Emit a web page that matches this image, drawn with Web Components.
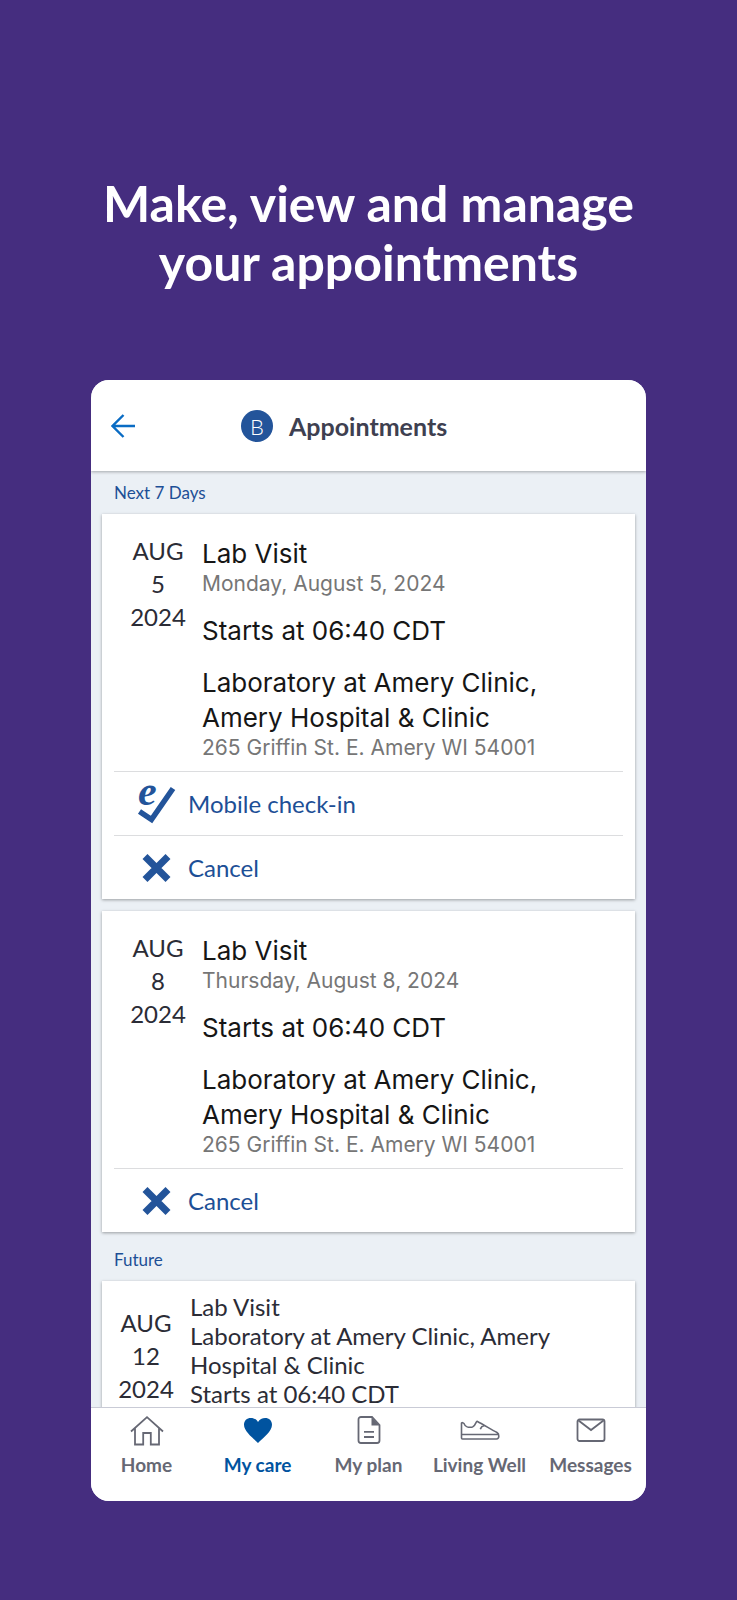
<!DOCTYPE html>
<html lang="en">
<head>
<meta charset="utf-8">
<meta name="viewport" content="width=device-width, initial-scale=1">
<title>Appointments</title>
<style>
    body {
        margin: 0;
        background: #452d7f;
        font-family: Lato, "Noto Sans", sans-serif;
        color: #2b2c36;
    }
</style>
</head>
<body>

<promo-stage>
    <span slot="headline">Make, view and manage<br>your appointments</span>
    <app-window>
        <app-header slot="header" initial="B">Appointments</app-header>

        <appointment-section label="Next 7 Days">
            <appointment-card month="AUG" day="5" year="2024" type="Lab Visit" date="Monday, August 5, 2024"
                time="Starts at 06:40 CDT" place="Laboratory at Amery Clinic, Amery Hospital &amp; Clinic"
                address="265 Griffin St. E. Amery WI 54001">
                <card-action icon="checkin">Mobile check-in</card-action>
                <card-action icon="cancel">Cancel</card-action>
            </appointment-card>
            <appointment-card month="AUG" day="8" year="2024" type="Lab Visit" date="Thursday, August 8, 2024"
                time="Starts at 06:40 CDT" place="Laboratory at Amery Clinic, Amery Hospital &amp; Clinic"
                address="265 Griffin St. E. Amery WI 54001">
                <card-action icon="cancel">Cancel</card-action>
            </appointment-card>
        </appointment-section>

        <appointment-section label="Future">
            <appointment-summary month="AUG" day="12" year="2024">
                <div>Lab Visit</div>
                <div>Laboratory at Amery Clinic, Amery Hospital &amp; Clinic</div>
                <div>Starts at 06:40 CDT</div>
            </appointment-summary>
        </appointment-section>

        <tab-bar slot="tabs">
            <tab-item icon="home">Home</tab-item>
            <tab-item icon="heart" active>My care</tab-item>
            <tab-item icon="plan">My plan</tab-item>
            <tab-item icon="shoe">Living Well</tab-item>
            <tab-item icon="mail">Messages</tab-item>
        </tab-bar>
    </app-window>
</promo-stage>

<script>
const icons = {
    back: `<svg width="24" height="24" viewBox="0 0 24 24" fill="none" stroke="#0a6cc4" stroke-width="2.4" aria-hidden="true">
        <path d="M24 12H1.5M12.5 1L1.5 12l11 11"/></svg>`,
    checkin: `<svg width="38" height="38" viewBox="0 0 38 38" overflow="visible" aria-hidden="true">
        <text x="0" y="20" font-family="Liberation Serif, serif" font-style="italic" font-weight="bold" font-size="42" fill="#23549a">e</text>
        <path d="M1.5 26.5L13.5 34.5 35 3.5" fill="none" stroke="#23549a" stroke-width="5.5"/></svg>`,
    cancel: `<svg width="38" height="38" viewBox="0 0 38 38" aria-hidden="true">
        <path d="M7 7.5l23 23M30 7.5l-23 23" fill="none" stroke="#23549a" stroke-width="7"/></svg>`,
    home: `<svg width="40" height="32" viewBox="0 0 40 32" fill="none" stroke="#666874" stroke-width="1.8" aria-hidden="true">
        <path d="M4 17.5L20 3.2l16 14.3M8 14v16.5h8.2V19h7.6v11.5H32V14"/></svg>`,
    heart: `<svg width="40" height="32" viewBox="0 0 40 32" fill="#00539f" aria-hidden="true">
        <path d="M20 29C15 24 6 17.5 6 10.8 6 6.5 9 4 12.8 4c3 0 5.700 1.300 7.200 4 1.500-2.700 4.200-4 7.200-4C31 4 34 6.500 34 10.800 34 17.500 25 24 20 29z"/></svg>`,
    plan: `<svg width="40" height="32" viewBox="0 0 40 32" fill="none" stroke="#666874" stroke-width="1.8" aria-hidden="true">
        <path d="M23 3H12a2.500 2.500 0 0 0-2.500 2.500v21A2.500 2.500 0 0 0 12 29h16a2.500 2.500 0 0 0 2.500-2.500V11z"/>
        <path d="M22.500 3v8.500h8z" fill="#666874" stroke="none"/>
        <path d="M15 17.800h10M15 23h10"/></svg>`,
    shoe: `<svg width="40" height="32" viewBox="0 0 40 32" fill="none" stroke="#666874" stroke-width="1.6" stroke-linejoin="round" aria-hidden="true">
        <path d="M1.500 9v15c0 .7.300 1 1 1h34c3 0 3-5 .5-6.500C32 16 25 11.500 17 7.200c-1 0-1.500 4.800-4.500 5.800-4 1-7.500-.5-8.500-3.500-.5-1-2.500-1-2.500-.5zM1.500 20.500h36.500M24.500 11.500c-2 .3-3.500 1.700-4.200 3.800"/></svg>`,
    mail: `<svg width="40" height="32" viewBox="0 0 40 32" fill="none" stroke="#666874" stroke-width="1.8" aria-hidden="true">
        <rect x="6.500" y="5.500" width="27" height="21.500" rx="2"/><path d="M7.500 6.500L20 16 32.500 6.500"/></svg>`
};

// month / day / year stack shared by both kinds of card
const dateStyle = `
    .date {
        text-align: center;
        font-size: 24px;
        line-height: 33px;
    }`;

function dateMarkup(el) {
    return `<div class="date">
        <div>${el.getAttribute('month')}</div>
        <div>${el.getAttribute('day')}</div>
        <div>${el.getAttribute('year')}</div>
    </div>`;
}

class PromoStage extends HTMLElement {
    connectedCallback() {
        this.attachShadow({mode: 'open'});
        this.shadowRoot.innerHTML =
            `<style>
                :host {
                    display: flex;
                    flex-direction: column;
                    box-sizing: border-box;
                    height: 100vh;
                    min-height: 900px;
                    padding: 174px 91px 99px;
                }
                h1 {
                    margin: 0 0 88px;
                    text-align: center;
                    font-size: 50px;
                    line-height: 59px;
                    font-weight: 700;
                    color: #fff;
                    white-space: nowrap;
                }
            </style>
            <h1><slot name="headline"></slot></h1>
            <slot></slot>`;
    }
}

class AppWindow extends HTMLElement {
    connectedCallback() {
        this.attachShadow({mode: 'open'});
        this.shadowRoot.innerHTML =
            `<style>
                :host {
                    display: flex;
                    flex-direction: column;
                    flex: 1;
                    min-height: 0;
                    border-radius: 18px;
                    overflow: hidden;
                    background: #ebf0f5;
                }
                main {
                    flex: 1;
                    min-height: 0;
                    overflow: hidden;
                    padding: 0 11px;
                }
            </style>
            <slot name="header"></slot>
            <main><slot></slot></main>
            <slot name="tabs"></slot>`;
    }
}

class AppHeader extends HTMLElement {
    connectedCallback() {
        this.attachShadow({mode: 'open'});
        this.shadowRoot.innerHTML =
            `<style>
                :host {
                    display: flex;
                    align-items: center;
                    gap: 106px;
                    height: 91px;
                    padding-left: 20px;
                    background: #fff;
                    box-shadow: 0 1px 3px rgba(0,0,0,0.3);
                    z-index: 1;
                }
                button {
                    display: flex;
                    padding: 0;
                    border: 0;
                    background: none;
                }
                .title {
                    display: flex;
                    align-items: center;
                    gap: 16px;
                }
                .avatar {
                    width: 32px;
                    height: 32px;
                    border-radius: 50%;
                    background: #23549a;
                    color: #fff;
                    font-size: 22px;
                    font-weight: 300;
                    line-height: 34px;
                    text-align: center;
                }
                h2 {
                    margin: 0;
                    font-size: 25px;
                    line-height: 32px;
                    font-weight: 700;
                    color: #3e4050;
                }
            </style>
            <button type="button" aria-label="Back">${icons.back}</button>
            <div class="title">
                <span class="avatar">${this.getAttribute('initial')}</span>
                <h2><slot></slot></h2>
            </div>`;
    }
}

class AppointmentSection extends HTMLElement {
    connectedCallback() {
        this.attachShadow({mode: 'open'});
        this.shadowRoot.innerHTML =
            `<style>
                :host {
                    display: flex;
                    flex-direction: column;
                    gap: 12px;
                    padding-top: 12px;
                }
                :host(:not(:first-of-type)) {
                    padding-top: 18px;
                }
                h3 {
                    margin: 0;
                    padding-left: 12px;
                    font-size: 17px;
                    line-height: 19px;
                    font-weight: 400;
                    color: #1d4f96;
                }
            </style>
            <h3>${this.getAttribute('label')}</h3>
            <slot></slot>`;
    }
}

class AppointmentCard extends HTMLElement {
    connectedCallback() {
        this.attachShadow({mode: 'open'});
        this.shadowRoot.innerHTML =
            `<style>
                :host {
                    display: block;
                    padding: 20px 12px 0;
                    background: #fff;
                    box-shadow: 0 1px 3px rgba(0,0,0,0.35);
                }
                ${dateStyle}
                .body {
                    display: grid;
                    grid-template-columns: 88px 1fr;
                    padding-bottom: 11px;
                }
                .details {
                    padding: 2px 24px 0 0;
                    font-family: Inter, "Liberation Sans", sans-serif;
                    font-size: 26px;
                    line-height: 35px;
                    color: #161616;
                }
                .small {
                    font-size: 21px;
                    line-height: 25px;
                    color: #767676;
                }
                .time {
                    margin: 17px 0;
                }
            </style>
            <div class="body">
                ${dateMarkup(this)}
                <div class="details">
                    <div>${this.getAttribute('type')}</div>
                    <div class="small">${this.getAttribute('date')}</div>
                    <div class="time">${this.getAttribute('time')}</div>
                    <div>${this.getAttribute('place')}</div>
                    <div class="small">${this.getAttribute('address')}</div>
                </div>
            </div>
            <slot></slot>`;
    }
}

class CardAction extends HTMLElement {
    connectedCallback() {
        this.attachShadow({mode: 'open'});
        this.shadowRoot.innerHTML =
            `<style>
                :host {
                    display: block;
                    border-top: 1px solid #dcdddf;
                }
                button {
                    display: flex;
                    align-items: center;
                    gap: 12px;
                    width: 100%;
                    height: 63px;
                    padding: 0 24px;
                    border: 0;
                    background: none;
                    font: inherit;
                    font-size: 24px;
                    color: #1d4f96;
                }
            </style>
            <button type="button">${icons[this.getAttribute('icon')]}<slot></slot></button>`;
    }
}

class AppointmentSummary extends HTMLElement {
    connectedCallback() {
        this.attachShadow({mode: 'open'});
        this.shadowRoot.innerHTML =
            `<style>
                :host {
                    display: grid;
                    grid-template-columns: 64px 1fr;
                    gap: 12px;
                    padding: 11px 12px;
                    background: #fff;
                    box-shadow: 0 1px 3px rgba(0,0,0,0.35);
                }
                ${dateStyle}
                .date {
                    padding-top: 14px;
                }
                .lines {
                    font-size: 24px;
                    line-height: 29px;
                }
            </style>
            ${dateMarkup(this)}
            <div class="lines"><slot></slot></div>`;
    }
}

class TabBar extends HTMLElement {
    connectedCallback() {
        this.attachShadow({mode: 'open'});
        this.shadowRoot.innerHTML =
            `<style>
                :host {
                    display: block;
                    border-top: 1px solid #c9cbd6;
                    background: #fff;
                }
                nav {
                    display: grid;
                    grid-template-columns: repeat(5, 1fr);
                    padding: 6px 0 24px;
                }
            </style>
            <nav><slot></slot></nav>`;
    }
}

class TabItem extends HTMLElement {
    connectedCallback() {
        this.attachShadow({mode: 'open'});
        this.shadowRoot.innerHTML =
            `<style>
                :host {
                    display: block;
                }
                a {
                    display: flex;
                    flex-direction: column;
                    align-items: center;
                    gap: 7px;
                    font-size: 19px;
                    line-height: 24px;
                    font-weight: 700;
                    color: #666874;
                    text-decoration: none;
                    white-space: nowrap;
                }
                :host([active]) a {
                    color: #00539f;
                }
            </style>
            <a href="#">${icons[this.getAttribute('icon')]}<span><slot></slot></span></a>`;
    }
}

customElements.define('promo-stage', PromoStage);
customElements.define('app-window', AppWindow);
customElements.define('app-header', AppHeader);
customElements.define('appointment-section', AppointmentSection);
customElements.define('appointment-card', AppointmentCard);
customElements.define('card-action', CardAction);
customElements.define('appointment-summary', AppointmentSummary);
customElements.define('tab-bar', TabBar);
customElements.define('tab-item', TabItem);
</script>
</body>
</html>
